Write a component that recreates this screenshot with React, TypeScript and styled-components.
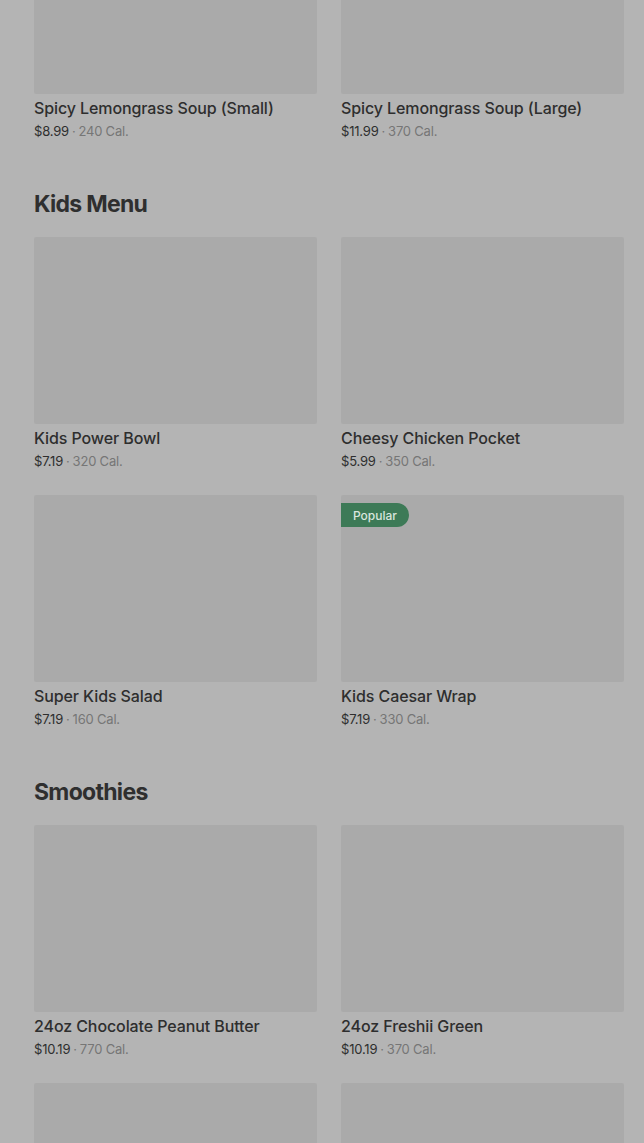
import React from "react";
import styled, { createGlobalStyle } from "styled-components";

const Global = createGlobalStyle`
  html, body { margin: 0; padding: 0; background: #b4b4b4; }
  body { font-family: Inter, "Open Sans", "Liberation Sans", sans-serif; overflow: hidden; }
`;

const Page = styled.main`
  padding: 0 20px 0 34px;
  margin-top: -93px;
  display: flex;
  flex-direction: column;
`;

const Section = styled.section`
  display: flex;
  flex-direction: column;
  & + & { margin-top: 49px; }
`;

const Heading = styled.h2`
  margin: 0 0 19px;
  height: 28px;
  line-height: 28px;
  font-size: 23px;
  font-weight: 700;
  letter-spacing: -0.7px;
  color: #2f2f2f;
`;

const Grid = styled.div`
  display: grid;
  grid-template-columns: 283px 283px;
  column-gap: 24px;
  row-gap: 24px;
`;

const Card = styled.article`
  display: flex;
  flex-direction: column;
  position: relative;
`;

const Image = styled.div`
  height: 187px;
  background: #aaaaaa;
  border-radius: 2px;
`;

const Badge = styled.span`
  position: absolute;
  top: 8px;
  left: 0;
  height: 24px;
  padding: 0 12px;
  display: flex;
  align-items: center;
  background: #3d7a57;
  color: #d9e6de;
  font-size: 12px;
  font-weight: 500;
  border-radius: 0 12px 12px 0;
`;

const Title = styled.div`
  margin-top: 4px;
  font-size: 16px;
  line-height: 20px;
  font-weight: 500;
  letter-spacing: -0.1px;
  color: #2e2e2e;
`;

const Meta = styled.div`
  margin-top: 3px;
  font-size: 13px;
  line-height: 20px;
  letter-spacing: -0.2px;
  color: #2e2e2e;
  display: flex;
  align-items: center;
`;

const Cal = styled.span`
  color: #767676;
`;

const Dot = styled.span`
  color: #767676;
  margin: 0 3px;
`;

type Item = { name: string; price: string; cal: string; popular?: boolean };

const sections: { title?: string; items: Item[] }[] = [
  {
    items: [
      { name: "Spicy Lemongrass Soup (Small)", price: "$8.99", cal: "240 Cal." },
      { name: "Spicy Lemongrass Soup (Large)", price: "$11.99", cal: "370 Cal." },
    ],
  },
  {
    title: "Kids Menu",
    items: [
      { name: "Kids Power Bowl", price: "$7.19", cal: "320 Cal." },
      { name: "Cheesy Chicken Pocket", price: "$5.99", cal: "350 Cal." },
      { name: "Super Kids Salad", price: "$7.19", cal: "160 Cal." },
      { name: "Kids Caesar Wrap", price: "$7.19", cal: "330 Cal.", popular: true },
    ],
  },
  {
    title: "Smoothies",
    items: [
      { name: "24oz Chocolate Peanut Butter", price: "$10.19", cal: "770 Cal." },
      { name: "24oz Freshii Green", price: "$10.19", cal: "370 Cal." },
      { name: "", price: "", cal: "" },
      { name: "", price: "", cal: "" },
    ],
  },
];

export default function App() {
  return (
    <>
      <Global />
      <Page>
        {sections.map((s, i) => (
          <Section key={i}>
            {s.title && <Heading>{s.title}</Heading>}
            <Grid>
              {s.items.map((it, j) => (
                <Card key={j}>
                  <Image />
                  {it.popular && <Badge>Popular</Badge>}
                  {it.name && (
                    <>
                      <Title>{it.name}</Title>
                      <Meta>
                        {it.price}
                        <Dot>·</Dot>
                        <Cal>{it.cal}</Cal>
                      </Meta>
                    </>
                  )}
                </Card>
              ))}
            </Grid>
          </Section>
        ))}
      </Page>
    </>
  );
}
